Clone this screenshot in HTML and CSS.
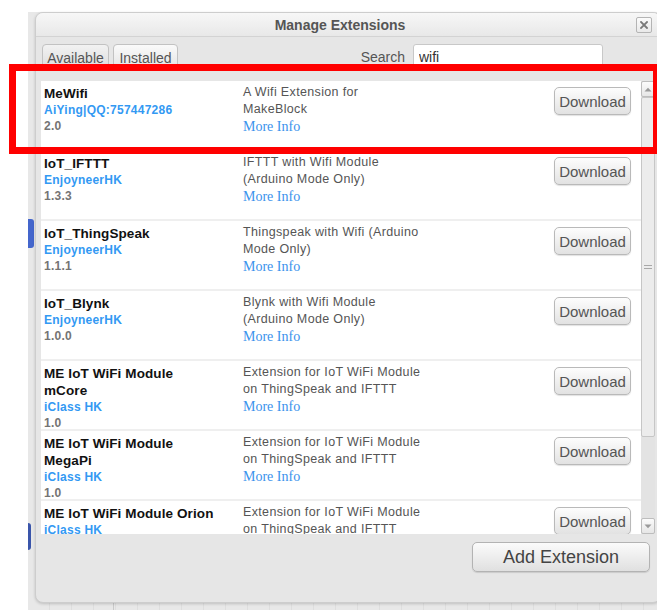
FILE: index.html
```html
<!DOCTYPE html>
<html lang="en">
<head>
<meta charset="utf-8">
<title>Manage Extensions</title>
<link rel="stylesheet" href="styles.css">
</head>
<body>
<div class="app">
  <div class="app-mark app-mark-top"></div>
  <div class="app-mark app-mark-bottom"></div>

  <div class="dialog">
    <div class="titlebar">
      <div class="title">Manage Extensions</div>
      <button class="close" aria-label="Close">
        <svg width="8" height="8" viewBox="0 0 8 8"><path d="M1 1L7 7M7 1L1 7" stroke="#7a7a7a" stroke-width="1.8" stroke-linecap="square"/></svg>
      </button>
    </div>

    <div class="toolbar">
      <button class="tab tab-available">Available</button>
      <button class="tab tab-installed">Installed</button>
      <span class="search-label">Search</span>
      <input class="search" type="text" value="wifi">
    </div>

    <div class="list">
      <div class="rows">
        <div class="row">
          <div class="info">
            <div class="name">MeWifi</div>
            <div class="author">AiYing|QQ:757447286</div>
            <div class="version">2.0</div>
          </div>
          <div class="desc">A Wifi Extension for<br>MakeBlock<br><span class="more">More Info</span></div>
          <button class="download">Download</button>
        </div>

        <div class="row">
          <div class="info">
            <div class="name">IoT_IFTTT</div>
            <div class="author">EnjoyneerHK</div>
            <div class="version">1.3.3</div>
          </div>
          <div class="desc">IFTTT with Wifi Module<br>(Arduino Mode Only)<br><span class="more">More Info</span></div>
          <button class="download">Download</button>
        </div>

        <div class="row">
          <div class="info">
            <div class="name">IoT_ThingSpeak</div>
            <div class="author">EnjoyneerHK</div>
            <div class="version">1.1.1</div>
          </div>
          <div class="desc">Thingspeak with Wifi (Arduino<br>Mode Only)<br><span class="more">More Info</span></div>
          <button class="download">Download</button>
        </div>

        <div class="row">
          <div class="info">
            <div class="name">IoT_Blynk</div>
            <div class="author">EnjoyneerHK</div>
            <div class="version">1.0.0</div>
          </div>
          <div class="desc">Blynk with Wifi Module<br>(Arduino Mode Only)<br><span class="more">More Info</span></div>
          <button class="download">Download</button>
        </div>

        <div class="row">
          <div class="info">
            <div class="name">ME IoT WiFi Module<br>mCore</div>
            <div class="author">iClass HK</div>
            <div class="version">1.0</div>
          </div>
          <div class="desc">Extension for IoT WiFi Module<br>on ThingSpeak and IFTTT<br><span class="more">More Info</span></div>
          <button class="download">Download</button>
        </div>

        <div class="row">
          <div class="info">
            <div class="name">ME IoT WiFi Module<br>MegaPi</div>
            <div class="author">iClass HK</div>
            <div class="version">1.0</div>
          </div>
          <div class="desc">Extension for IoT WiFi Module<br>on ThingSpeak and IFTTT<br><span class="more">More Info</span></div>
          <button class="download">Download</button>
        </div>

        <div class="row">
          <div class="info">
            <div class="name">ME IoT WiFi Module Orion</div>
            <div class="author">iClass HK</div>
            <div class="version">1.0</div>
          </div>
          <div class="desc">Extension for IoT WiFi Module<br>on ThingSpeak and IFTTT<br><span class="more">More Info</span></div>
          <button class="download">Download</button>
        </div>
      </div>

      <div class="scrollbar">
        <div class="scroll-btn">
          <svg width="8" height="5" viewBox="0 0 8 5"><path d="M0.5 4.5L4 0.8L7.5 4.5Z" fill="#9a9a9a"/></svg>
        </div>
        <div class="scroll-thumb">
          <svg width="8" height="4" viewBox="0 0 8 4"><path d="M0 0.5H8M0 3.5H8" stroke="#a8a8a8" stroke-width="1"/></svg>
        </div>
        <div class="scroll-track"></div>
        <div class="scroll-btn">
          <svg width="8" height="5" viewBox="0 0 8 5"><path d="M0.5 0.5L4 4.2L7.5 0.5Z" fill="#9a9a9a"/></svg>
        </div>
      </div>
    </div>

    <div class="footer">
      <button class="add">Add Extension</button>
    </div>
  </div>
</div>

<div class="highlight"></div>
</body>
</html>
```

FILE: styles.css
```css
* {
  box-sizing: border-box;
}

body {
  margin: 0;
  width: 657px;
  height: 610px;
  padding-top: 12px;
  overflow: hidden;
  position: relative;
  background: #ffffff;
  font-family: "Liberation Sans", Arial, sans-serif;
}

button,
input {
  font-family: "Liberation Sans", Arial, sans-serif;
  margin: 0;
}

/* host application behind the dialog */
.app {
  margin-left: 28px;
  height: 598px;
  position: relative;
  background-color: #e8e8e8;
  background-image:
    linear-gradient(to right, transparent 85px, #c9c9c9 85px, #c9c9c9 86px, transparent 86px),
    repeating-linear-gradient(to right, transparent 0, transparent 21px, #dedede 21px, #dedede 22px);
}

.app-mark {
  position: absolute;
  left: 0;
  border-radius: 0 3px 3px 0;
}

.app-mark-top {
  top: 207px;
  width: 6px;
  height: 29px;
  background: #4466cc;
}

.app-mark-bottom {
  top: 511px;
  width: 3px;
  height: 27px;
  background: #3a55aa;
}

/* dialog window */
.dialog {
  margin-left: 7px;
  width: 626px;
  height: 591px;
  display: flex;
  flex-direction: column;
  border: 1px solid #cdcdcd;
  border-radius: 8px;
  background: #e6e6e6;
  box-shadow: 0 1px 3px rgba(0, 0, 0, 0.18);
  overflow: hidden;
  position: relative;
}

.titlebar {
  height: 24px;
  flex: none;
  display: grid;
  grid-template-columns: 1fr 16px;
  align-items: center;
  padding: 0 8px;
  border-bottom: 1px solid #d3d3d3;
  background: linear-gradient(#f7f7f7, #e8e8e8);
}

.title {
  text-align: center;
  font-size: 14px;
  font-weight: bold;
  color: #555555;
  line-height: 16px;
  padding-top: 1px;
}

.close {
  width: 16px;
  height: 16px;
  padding: 0;
  display: flex;
  align-items: center;
  justify-content: center;
  border: 1px solid #b4b4b4;
  border-radius: 2px;
  background: linear-gradient(#fbfbfb, #e9e9e9);
}

.toolbar {
  height: 44px;
  flex: none;
  display: flex;
  align-items: flex-start;
  padding: 7px 57px 0 6px;
}

.tab {
  height: 27px;
  padding: 0;
  font-size: 14px;
  line-height: 16px;
  color: #555555;
  border: 1px solid #c2c2c2;
  border-radius: 4px 4px 0 0;
  background: linear-gradient(#fafafa, #e3e3e3);
}

.tab-available {
  width: 67px;
  background: linear-gradient(#f2f2f2, #dcdcdc);
}

.tab-installed {
  width: 65px;
  margin-left: 4px;
}

.search-label {
  margin-left: auto;
  margin-right: 8px;
  font-size: 14px;
  line-height: 27px;
  color: #555555;
}

.search {
  width: 190px;
  height: 25px;
  padding: 0 5px;
  font-size: 14px;
  color: #333333;
  border: 1px solid #c8c8c8;
  border-radius: 3px;
  background: #ffffff;
  outline: none;
}

/* extension list */
.list {
  height: 453px;
  flex: none;
  display: flex;
  margin: 0 5px;
}

.rows {
  width: 600px;
  height: 100%;
  overflow: hidden;
  background: #efefef;
}

.row {
  height: 68px;
  margin-bottom: 2px;
  display: grid;
  grid-template-columns: 199px 1fr 77px;
  align-items: start;
  padding: 4px 10px 0 3px;
  background: #ffffff;
  white-space: nowrap;
}

.name {
  font-size: 13.5px;
  font-weight: bold;
  line-height: 17px;
  letter-spacing: 0.1px;
  color: #111111;
}

.author {
  font-size: 12px;
  font-weight: bold;
  line-height: 16px;
  letter-spacing: 0.25px;
  color: #3399f3;
}

.version {
  font-size: 12px;
  font-weight: bold;
  line-height: 16px;
  letter-spacing: 0.25px;
  color: #747474;
}

.desc {
  margin-top: -1px;
  font-size: 12.5px;
  line-height: 17px;
  letter-spacing: 0.35px;
  color: #555555;
}

.more {
  font-family: "Liberation Serif", "Times New Roman", serif;
  font-size: 14px;
  letter-spacing: 0;
  color: #3b93ec;
}

.download {
  width: 77px;
  height: 28px;
  margin-top: 2px;
  padding: 0;
  font-size: 15px;
  color: #555555;
  border: 1px solid #b9b9b9;
  border-radius: 5px;
  background: linear-gradient(#fdfdfd, #e2e2e2);
  box-shadow: 0 1px 1px rgba(0, 0, 0, 0.12);
}

/* scrollbar */
.scrollbar {
  width: 14px;
  display: flex;
  flex-direction: column;
  background: #e3e3e3;
}

.scroll-btn {
  height: 16px;
  flex: none;
  display: flex;
  align-items: center;
  justify-content: center;
  border: 1px solid #bdbdbd;
  border-radius: 2px;
  background: linear-gradient(#fbfbfb, #e6e6e6);
}

.scroll-thumb {
  height: 340px;
  flex: none;
  display: flex;
  align-items: center;
  justify-content: center;
  border: 1px solid #c6c6c6;
  border-radius: 2px;
  background: #ececec;
}

.scroll-track {
  flex: 1;
  background: #e3e3e3;
}

/* footer */
.footer {
  display: flex;
  justify-content: flex-end;
  padding: 8px 10px 0 0;
}

.add {
  width: 178px;
  height: 30px;
  padding: 0;
  font-size: 18px;
  color: #444444;
  border: 1px solid #b3b3b3;
  border-radius: 5px;
  background: linear-gradient(#fbfbfb, #e0e0e0);
  box-shadow: 0 1px 1px rgba(0, 0, 0, 0.12);
}

/* annotation frame drawn over the first list entry */
.highlight {
  position: absolute;
  left: 9px;
  top: 64px;
  width: 651px;
  height: 90px;
  border: 7px solid #ff0000;
  pointer-events: none;
}
```
